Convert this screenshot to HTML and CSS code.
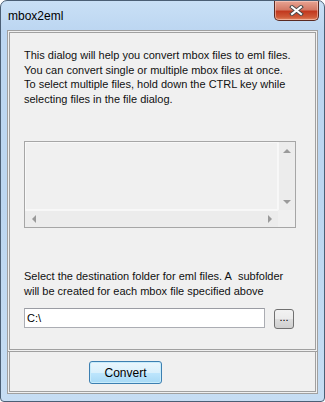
FILE: index.html
```html
<!DOCTYPE html>
<html lang="en">
<head>
  <meta charset="UTF-8">
  <title>mbox2eml</title>
  <link rel="stylesheet" href="styles.css">
</head>
<body>
  <div class="window">
    <div class="titlebar">
      <span class="title">mbox2eml</span>
      <button type="button" class="close-btn">
        <svg width="15" height="11" viewBox="0 0 15 11">
          <path d="M3 2 L12 9 M12 2 L3 9" stroke="#4a4a4a" stroke-width="4" stroke-linecap="square"/>
          <path d="M3 2 L12 9 M12 2 L3 9" stroke="#ffffff" stroke-width="2" stroke-linecap="square"/>
        </svg>
      </button>
    </div>
    <div class="client">
      <div class="panel top-panel">
        <p class="info">This dialog will help you convert mbox files to eml files.<br>You can convert single or multiple mbox files at once.<br>To select multiple files, hold down the CTRL key while<br>selecting files in the file dialog.</p>

        <div class="listbox">
          <div class="list-area"></div>
          <div class="vscroll">
            <span class="arrow up"></span>
            <span class="arrow down"></span>
          </div>
          <div class="hscroll">
            <span class="arrow left"></span>
            <span class="arrow right"></span>
          </div>
          <div class="corner"></div>
        </div>

        <p class="info dest">Select the destination folder for eml files. A&nbsp; subfolder<br>will be created for each mbox file specified above</p>

        <div class="folder-row">
          <input type="text" class="folder" value="C:\">
          <button type="button" class="browse-btn">...</button>
        </div>
      </div>
      <div class="panel bottom-panel">
        <button type="button" class="convert-btn">Convert</button>
      </div>
    </div>
  </div>
</body>
</html>
```

FILE: styles.css
```css
html, body {
  margin: 0;
  padding: 0;
}
body {
  font-family: "Liberation Sans", Arial, sans-serif;
  font-size: 11px;
  color: #000;
  background: #fff;
}
.window {
  width: 325px;
  height: 402px;
  box-sizing: border-box;
  border: 1px solid #4b5f75;
  border-radius: 7px 7px 4px 4px;
  background: linear-gradient(to bottom, #c9e0f6 0px, #bcd6f1 30px, #bcd6f0 200px, #c6ddf3 402px);
  display: flex;
  flex-direction: column;
  overflow: hidden;
}
.titlebar {
  height: 29px;
  display: flex;
  align-items: flex-start;
}
.title {
  margin-left: 7px;
  margin-top: 7px;
  line-height: 16px;
  font-size: 12px;
  color: #000;
}
.close-btn {
  margin-left: auto;
  margin-right: 5px;
  width: 45px;
  height: 20px;
  padding: 0;
  border: 1px solid #5a2a22;
  border-top: none;
  border-radius: 0 0 5px 5px;
  background: linear-gradient(to bottom, #e8a493 0%, #d47a66 45%, #c2391f 55%, #cf5a38 85%, #e28a66 100%);
  box-shadow: inset 0 0 0 1px rgba(255,220,210,0.5);
  display: flex;
  align-items: center;
  justify-content: center;
}
.client {
  margin: 0 6px 7px 6px;
  background: #f0f0f0;
  flex: 1;
  display: flex;
  flex-direction: column;
}
.panel {
  border: 3px double #a0a0a0;
}
.top-panel {
  height: 322px;
  box-sizing: border-box;
  padding: 15px 0 0 14px;
}
.bottom-panel {
  flex: 1;
  border-top: none;
  padding: 9px 0 0 79px;
}
.info {
  margin: 0;
  line-height: 14.7px;
  white-space: nowrap;
  color: #111;
}
.listbox {
  margin-top: 34px;
  width: 272px;
  height: 87px;
  box-sizing: border-box;
  border: 1px solid #a6a6a6;
  background: #f0f0f0;
  display: grid;
  grid-template-columns: 1fr 17px;
  grid-template-rows: 1fr 17px;
}
.list-area {
  border: 1px solid #f8f8f8;
}
.vscroll {
  background: #ececec;
  border-left: 1px solid #f7f7f7;
  display: flex;
  flex-direction: column;
  justify-content: space-between;
  align-items: center;
  padding: 7px 0 6px 0;
}
.hscroll {
  background: #ececec;
  border-top: 1px solid #f7f7f7;
  display: flex;
  justify-content: space-between;
  align-items: center;
  padding: 0 6px 0 7px;
}
.corner {
  background: #f0f0f0;
}
.arrow {
  width: 0;
  height: 0;
  border: 4px solid transparent;
}
.arrow.up {
  border-bottom: 4px solid #9a9a9a;
  border-top-width: 0;
}
.arrow.down {
  border-top: 4px solid #9a9a9a;
  border-bottom-width: 0;
}
.arrow.left {
  border-right: 4px solid #9a9a9a;
  border-left-width: 0;
}
.arrow.right {
  border-left: 4px solid #9a9a9a;
  border-right-width: 0;
}
.dest {
  margin-top: 41px;
}
.folder-row {
  margin-top: 10px;
  display: flex;
  align-items: flex-start;
  gap: 9px;
}
.folder {
  width: 241px;
  height: 20px;
  box-sizing: border-box;
  margin: 0;
  padding: 0 2px;
  border: 1px solid #abadb3;
  border-top-color: #9a9ca3;
  font-family: inherit;
  font-size: 11px;
  color: #000;
  background: #fff;
  outline: none;
}
.browse-btn {
  width: 20px;
  height: 20px;
  padding: 0 0 4px 0;
  margin-top: 1px;
  border: 1px solid #707070;
  border-radius: 3px;
  background: linear-gradient(to bottom, #f2f2f2 0%, #ebebeb 50%, #dddddd 51%, #cfcfcf 100%);
  font-family: inherit;
  font-size: 11px;
  line-height: 10px;
  color: #000;
}
.convert-btn {
  width: 73px;
  height: 23px;
  padding: 0;
  border: 1px solid #3c7fb1;
  border-radius: 3px;
  background: linear-gradient(to bottom, #eaf6fd 0%, #d9f0fc 50%, #bee6fd 51%, #a7d9f5 100%);
  box-shadow: inset 0 0 0 1px #c8ecfb;
  font-family: inherit;
  font-size: 12px;
  color: #000;
}
```
